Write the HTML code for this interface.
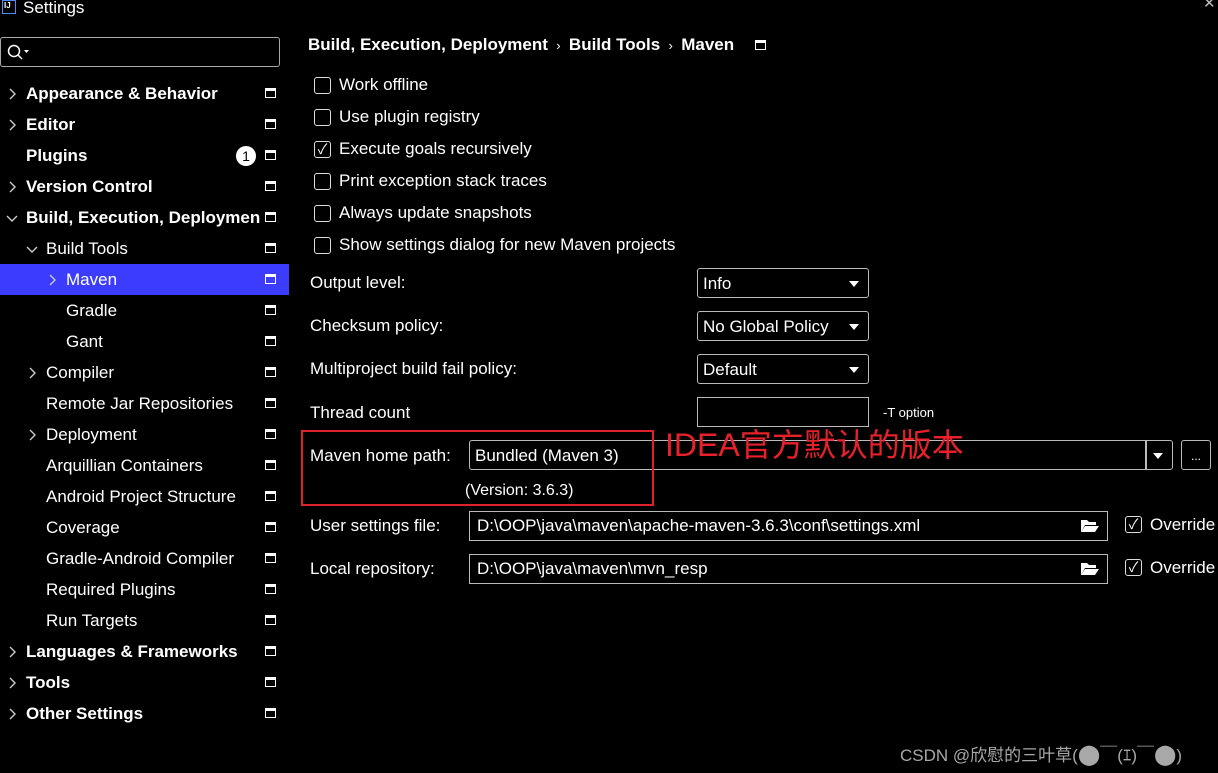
<!DOCTYPE html>
<html><head><meta charset="utf-8"><style>
*{margin:0;padding:0;box-sizing:border-box}
body{width:1218px;height:773px;background:#000;color:#fff;font-family:"Liberation Sans","Noto Sans CJK SC",sans-serif;font-size:17px;position:relative;overflow:hidden}
.a{position:absolute;white-space:nowrap}
.row{position:absolute;left:0;width:289px;height:31px;line-height:31px}
.b{font-weight:bold}
.ic{position:absolute;left:265px;top:10px;width:11px;height:10px;border:1.5px solid #fff;border-top-width:3px}
.ch{position:absolute;top:10px}
.cb{position:absolute;left:314px;width:17px;height:17px;border:1.5px solid #ddd;border-radius:3px}
.cbt{position:absolute;left:339px}
.box{position:absolute;border:1.5px solid #bbb;border-radius:3px}
.tri{position:absolute;width:0;height:0;border-left:5px solid transparent;border-right:5px solid transparent;border-top:6px solid #fff}
</style></head><body>
<div class="a" style="left:2px;top:0;width:14px;height:14px;border:1.5px solid #4a8cff;font-size:8px;line-height:9px;font-weight:bold;padding-left:1px">IJ</div>
<div class="a" style="left:23px;top:-2px;font-size:17px">Settings</div>
<div class="a" style="left:1203px;top:-6px;font-size:15px;color:#bbb">✕</div>
<div class="box" style="left:0;top:37px;width:280px;height:30px;border-color:#aaa"></div>
<svg class="a" style="left:6px;top:43px" width="24" height="18"><circle cx="8" cy="8" r="5.5" stroke="#fff" stroke-width="1.5" fill="none"/><line x1="12" y1="12" x2="16" y2="16" stroke="#fff" stroke-width="1.5"/><path d="M18 7h5l-2.5 3z" fill="#fff"/></svg>

<svg width="0" height="0" style="position:absolute"><defs>
<symbol id="r" viewBox="0 0 10 12"><path d="M3 1l5 5-5 5" stroke="#ccc" stroke-width="1.4" fill="none"/></symbol>
<symbol id="d" viewBox="0 0 12 10"><path d="M1 3l5 5 5-5" stroke="#ccc" stroke-width="1.4" fill="none"/></symbol>
</defs></svg>

<div class="row b" style="top:78px"><svg class="ch" style="left:7px" width="10" height="12"><use href="#r"/></svg><span class="a" style="left:26px">Appearance &amp; Behavior</span><i class="ic"></i></div>
<div class="row b" style="top:109px"><svg class="ch" style="left:7px" width="10" height="12"><use href="#r"/></svg><span class="a" style="left:26px">Editor</span><i class="ic"></i></div>
<div class="row b" style="top:140px"><span class="a" style="left:26px">Plugins</span><span class="a" style="left:236px;top:6px;width:20px;height:20px;border-radius:10px;background:#fff;color:#000;font-size:14px;line-height:20px;text-align:center;font-weight:normal">1</span><i class="ic"></i></div>
<div class="row b" style="top:171px"><svg class="ch" style="left:7px" width="10" height="12"><use href="#r"/></svg><span class="a" style="left:26px">Version Control</span><i class="ic"></i></div>
<div class="row b" style="top:202px"><svg class="ch" style="left:6px;top:11px" width="12" height="10"><use href="#d"/></svg><span class="a" style="left:26px;width:234px;overflow:hidden">Build, Execution, Deployment</span><i class="ic"></i></div>
<div class="row" style="top:233px"><svg class="ch" style="left:26px;top:11px" width="12" height="10"><use href="#d"/></svg><span class="a" style="left:46px">Build Tools</span><i class="ic"></i></div>
<div class="row" style="top:264px;background:#3c3cff"><svg class="ch" style="left:47px" width="10" height="12"><use href="#r"/></svg><span class="a" style="left:66px">Maven</span><i class="ic"></i></div>
<div class="row" style="top:295px"><span class="a" style="left:66px">Gradle</span><i class="ic"></i></div>
<div class="row" style="top:326px"><span class="a" style="left:66px">Gant</span><i class="ic"></i></div>
<div class="row" style="top:357px"><svg class="ch" style="left:27px" width="10" height="12"><use href="#r"/></svg><span class="a" style="left:46px">Compiler</span><i class="ic"></i></div>
<div class="row" style="top:388px"><span class="a" style="left:46px">Remote Jar Repositories</span><i class="ic"></i></div>
<div class="row" style="top:419px"><svg class="ch" style="left:27px" width="10" height="12"><use href="#r"/></svg><span class="a" style="left:46px">Deployment</span><i class="ic"></i></div>
<div class="row" style="top:450px"><span class="a" style="left:46px">Arquillian Containers</span><i class="ic"></i></div>
<div class="row" style="top:481px"><span class="a" style="left:46px">Android Project Structure</span><i class="ic"></i></div>
<div class="row" style="top:512px"><span class="a" style="left:46px">Coverage</span><i class="ic"></i></div>
<div class="row" style="top:543px"><span class="a" style="left:46px">Gradle-Android Compiler</span><i class="ic"></i></div>
<div class="row" style="top:574px"><span class="a" style="left:46px">Required Plugins</span><i class="ic"></i></div>
<div class="row" style="top:605px"><span class="a" style="left:46px">Run Targets</span><i class="ic"></i></div>
<div class="row b" style="top:636px"><svg class="ch" style="left:7px" width="10" height="12"><use href="#r"/></svg><span class="a" style="left:26px">Languages &amp; Frameworks</span><i class="ic"></i></div>
<div class="row b" style="top:667px"><svg class="ch" style="left:7px" width="10" height="12"><use href="#r"/></svg><span class="a" style="left:26px">Tools</span><i class="ic"></i></div>
<div class="row b" style="top:698px"><svg class="ch" style="left:7px" width="10" height="12"><use href="#r"/></svg><span class="a" style="left:26px">Other Settings</span><i class="ic"></i></div>

<div class="a b" style="left:308px;top:35px">Build, Execution, Deployment <span style="font-weight:normal;font-size:13px">&nbsp;›&nbsp;</span> Build Tools <span style="font-weight:normal;font-size:13px">&nbsp;›&nbsp;</span> Maven</div>
<i class="ic" style="left:755px;top:40px"></i>

<div class="cb" style="top:77px"></div><div class="a cbt" style="top:75px">Work offline</div>
<div class="cb" style="top:109px"></div><div class="a cbt" style="top:107px">Use plugin registry</div>
<div class="cb" style="top:141px;text-align:center;line-height:14px;font-size:14px">✓</div><div class="a cbt" style="top:139px">Execute goals recursively</div>
<div class="cb" style="top:173px"></div><div class="a cbt" style="top:171px">Print exception stack traces</div>
<div class="cb" style="top:205px"></div><div class="a cbt" style="top:203px">Always update snapshots</div>
<div class="cb" style="top:237px"></div><div class="a cbt" style="top:235px">Show settings dialog for new Maven projects</div>

<div class="a" style="left:310px;top:273px">Output level:</div>
<div class="box" style="left:697px;top:268px;width:172px;height:30px"></div><div class="a" style="left:703px;top:274px">Info</div><i class="tri" style="left:849px;top:281px"></i>
<div class="a" style="left:310px;top:316px">Checksum policy:</div>
<div class="box" style="left:697px;top:311px;width:172px;height:30px"></div><div class="a" style="left:703px;top:317px">No Global Policy</div><i class="tri" style="left:849px;top:324px"></i>
<div class="a" style="left:310px;top:359px">Multiproject build fail policy:</div>
<div class="box" style="left:697px;top:354px;width:172px;height:30px"></div><div class="a" style="left:703px;top:360px">Default</div><i class="tri" style="left:849px;top:367px"></i>
<div class="a" style="left:310px;top:403px">Thread count</div>
<div class="box" style="left:697px;top:397px;width:172px;height:30px;border-radius:0"></div>
<div class="a" style="left:883px;top:405px;font-size:13px">-T option</div>

<div class="a" style="left:310px;top:446px">Maven home path:</div>
<div class="box" style="left:469px;top:440px;width:704px;height:30px"></div>
<div class="a" style="left:1145px;top:441px;width:1.5px;height:28px;background:#bbb"></div>
<i class="tri" style="left:1153px;top:453px"></i>
<div class="a" style="left:475px;top:446px">Bundled (Maven 3)</div>
<div class="box" style="left:1181px;top:440px;width:30px;height:30px;text-align:center;font-size:12px;line-height:30px">...</div>
<div class="a" style="left:465px;top:482px;font-size:16px">(Version: 3.6.3)</div>
<div class="a" style="left:301px;top:430px;width:353px;height:76px;border:2px solid #e0202a"></div>
<div class="a" style="left:665px;top:427px;font-size:32px;color:#e8202a;line-height:36px">IDEA官方默认的版本</div>

<div class="a" style="left:310px;top:516px">User settings file:</div>
<div class="box" style="left:469px;top:511px;width:639px;height:30px;border-radius:0"></div>
<div class="a" style="left:477px;top:516px">D:\OOP\java\maven\apache-maven-3.6.3\conf\settings.xml</div>
<svg class="a" style="left:1080px;top:518px" width="20" height="15"><path d="M1 2h6l2 2h7v3H5L1 14z" fill="#fff"/><path d="M5 8h14l-4 6H1z" fill="#fff"/></svg>
<div class="cb" style="left:1125px;top:516px;text-align:center;line-height:14px;font-size:14px">✓</div><div class="a" style="left:1150px;top:515px">Override</div>

<div class="a" style="left:310px;top:559px">Local repository:</div>
<div class="box" style="left:469px;top:554px;width:639px;height:30px;border-radius:0"></div>
<div class="a" style="left:477px;top:559px">D:\OOP\java\maven\mvn_resp</div>
<svg class="a" style="left:1080px;top:561px" width="20" height="15"><path d="M1 2h6l2 2h7v3H5L1 14z" fill="#fff"/><path d="M5 8h14l-4 6H1z" fill="#fff"/></svg>
<div class="cb" style="left:1125px;top:559px;text-align:center;line-height:14px;font-size:14px">✓</div><div class="a" style="left:1150px;top:558px">Override</div>

<div class="a" style="left:900px;top:741px;font-size:17px;color:#a8a8a8">CSDN @欣慰的三叶草(<span style="font-size:20px">⬤</span>￣(ｴ)￣<span style="font-size:20px">⬤</span>)</div>
</body></html>
